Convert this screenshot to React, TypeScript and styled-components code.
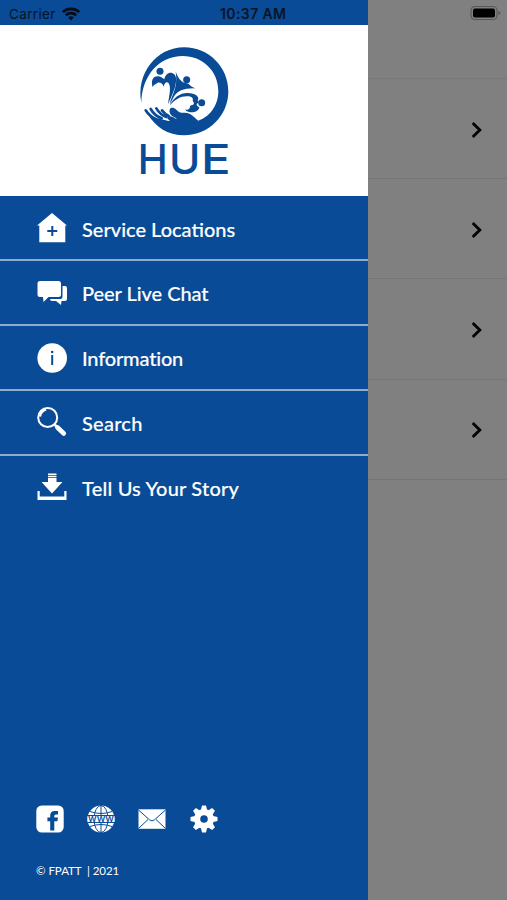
import React from "react";
import styled, { createGlobalStyle } from "styled-components";

const BLUE = "#094b96";

const GlobalStyle = createGlobalStyle`
  * { box-sizing: border-box; }
  body { margin: 0; background: #808080; }
`;
const Screen = styled.div`
  display: grid;
  grid-template-columns: 368px 1fr;
  height: 900px;
  overflow: hidden;
`;
const Drawer = styled.aside`
  display: flex;
  flex-direction: column;
  background: ${BLUE};
  color: #fff;
  font-family: Lato, "Liberation Sans", sans-serif;
`;
const StatusBar = styled.div`
  display: flex;
  align-items: center;
  height: 25px;
  flex: none;
  padding: 2px 0 0 9px;
  color: #071426;
  font: 400 13.5px/20px Inter, "Liberation Sans", sans-serif;
`;
const Carrier = styled.span`
  width: 53px;
  letter-spacing: 0.35px;
`;
const Clock = styled.span`
  margin-left: 140px;
  font-weight: 600;
  font-size: 14px;
  letter-spacing: 0.4px;
  white-space: nowrap;
`;
const Brand = styled.header`
  display: flex;
  justify-content: center;
  height: 171px;
  flex: none;
  padding: 13px 0 0 2px;
  background: #fff;
`;
const Menu = styled.nav`
  display: flex;
  flex-direction: column;
  padding-top: 0.7px;
`;
const MenuItem = styled.a`
  display: flex;
  align-items: center;
  gap: 14px;
  height: 64.8px;
  padding-left: 37px;
  border-bottom: 2px solid #8eacd0;
  &:last-child { border-bottom-color: transparent; }
`;
const MenuLabel = styled.span<{ $spacing: number }>`
  font-size: 20px;
  line-height: 24px;
  font-weight: 500;
  -webkit-text-stroke: 0.15px #fff;
  letter-spacing: ${(p) => p.$spacing}px;
  white-space: nowrap;
  padding-top: 1px;
`;
const Footer = styled.footer`
  margin-top: auto;
  padding: 0 0 21px 36px;
`;
const Social = styled.div`
  display: flex;
  align-items: center;
  gap: 23.2px;
  height: 28px;
`;
const Copyright = styled.p`
  margin: 29px 0 0;
  font-size: 11.5px;
  line-height: 17px;
  white-space: pre;
  letter-spacing: -0.05px;
`;
const Page = styled.main`
  display: flex;
  flex-direction: column;
  background: #808080;
`;
const PageTop = styled.div`
  display: flex;
  justify-content: flex-end;
  height: 79px;
  padding: 5px 6px 0 0;
  border-bottom: 1px solid #787878;
`;
const PageRow = styled.div`
  display: flex;
  align-items: center;
  justify-content: flex-end;
  height: 100.2px;
  padding: 2px 24px 0 0;
  border-bottom: 1px solid #757575;
`;

const Logo = () => (
  <svg width="110" height="145" viewBox="0 0 330 435" fill={BLUE}>
    <path d="M34 194C18 108 78 28 163 28c73 0 132 59 132 132s-59 132-132 132c-50 0-88-26-110-65l30 20c16 5 28 4 37 1-17-10-3-18 10-10 16 10 41 20 75 10C238 238 265 203 265 160 265 98 217 54 158 54 88 54 36 112 34 194z" />
    <path d="M75 240c25 1 39 14 60 8 7-2 6-6 1-9-12-5-19-13-17-24 2-8 12-7 20 0 8 8 15 10 24 9 18-1 29 13 42 24l-20 29c-40 12-90 6-110-37z" />
    <g fill="none" stroke={BLUE} strokeLinecap="round" strokeWidth="8">
      <path d="M47 217c7 11 16 20 30 26" />
      <path d="M62 213c8 14 19 23 33 28" />
      <path d="M79 211c7 12 17 21 30 26" />
      <path d="M96 217c6 8 12 13 20 17" />
    </g>
    <circle cx="90" cy="100" r="10.500" />
    <circle cx="170" cy="125" r="10.500" />
    <circle cx="215" cy="194" r="10.500" />
    <path d="M68 148C62 128 69 114 84 115c8 0 13 5 19 9 3-14 14-23 25-18 21 9 7 50-14 93 3-24 9-46 4-59-5-13-15-6-17 6-3-10-10-13-17-12-4 0-5 4-8 5-5 2-6 4-8 9z" />
    <path d="M137 101c8 19 15 29 26 33 6 2 10 0 14 5 5 6 11 9 19 12-34-1-53 7-65 26l-11 21c3-24 25-48 17-97z" />
    <path d="M119 203c11-24 31-38 53-38 26 0 38 13 31 22 4 5 2 9-3 11 0 7 5 8 8 10-3 17-30 20-43 7 8 1 12-1 14-5 2-4-1-6 5-8 9-2 10-7 4-13 3-9-4-14-15-14-20-1-38 9-54 28z" />
    <g fontFamily="Inter, sans-serif" fontSize="122" fontWeight="500">
      <text x="23" y="408" textLength="90" lengthAdjust="spacingAndGlyphs">H</text>
      <text x="117" y="408" textLength="94" lengthAdjust="spacingAndGlyphs">U</text>
      <text x="213" y="408" textLength="89" lengthAdjust="spacingAndGlyphs">E</text>
    </g>
  </svg>
);

const Wifi = () => (
  <svg width="18" height="14" viewBox="0 0 18 14" fill="none" stroke="#050d18" strokeWidth="2.700">
    <path d="M.8 5C5.300.7 12.700.7 17.200 5M3.800 8.200c2.900-2.800 7.500-2.800 10.400 0" />
    <path d="M9 13.500 6.200 10.500a4 4 0 0 1 5.600 0z" fill="#050d18" stroke="none" />
  </svg>
);

const Battery = () => (
  <svg width="31" height="16" viewBox="0 0 31 16">
    <rect x="1" y="1.500" width="26" height="13" rx="4" fill="none" stroke="#585858" strokeWidth="1.200" />
    <rect x="3" y="3.500" width="22" height="9" rx="2" />
    <path d="M28.500 6v4q2-.5 2-2t-2-2z" fill="#585858" />
  </svg>
);

const Home = () => (
  <svg width="31" height="32" viewBox="0 0 31 32">
    <path d="M15 1 0 13.500h2.300V30.200h26V13.500H30z" fill="#fff" />
    <path d="M15.300 14v10M10.300 19h10" stroke={BLUE} strokeWidth="2" />
  </svg>
);

const Chat = () => (
  <svg width="31" height="28" viewBox="0 0 31 28" fill="#fff">
    <path d="M25.500 7h2.500q2 0 2 2v11q0 2-2 2h-3.500l-.5 4-5-4h-4q-2 0-2-2h10.500q2 0 2-2z" />
    <path d="M3 2h18.500Q24 2 24 4.500v11q0 2.500-2.500 2.500h-10L6.500 23 6 18H3Q.5 18 .5 15.500v-11Q.5 2 3 2z" />
  </svg>
);

const Info = () => (
  <svg width="31" height="32" viewBox="0 0 31 32">
    <circle cx="15.200" cy="16" r="14.800" fill="#fff" />
    <circle cx="15.200" cy="10" r="1.300" fill={BLUE} />
    <path d="M15.200 13v10" stroke={BLUE} strokeWidth="2" />
  </svg>
);

const Search = () => (
  <svg width="31" height="32" viewBox="0 0 31 32" fill="none" stroke="#fff">
    <circle cx="10.700" cy="11.500" r="9.500" strokeWidth="2" />
    <path d="m17 18 4 4" strokeWidth="2.500" />
    <path d="m20.500 21.500 6.300 6" strokeWidth="4.600" strokeLinecap="round" />
    <path d="M3 10.500c.5-4 2-5.500 6-7" strokeWidth="2.300" />
  </svg>
);

const Download = () => (
  <svg width="31" height="32" viewBox="0 0 31 32" fill="#fff">
    <path d="M11 2.500h8.500V4H11zm0 2.300h8.500v1.400H11zM11 7h8.500v4h6L15 22.500 4.500 11H11z" />
    <path d="M.5 20h2.200v5.500h24.600V20h2.200v9H.5z" />
  </svg>
);

const Facebook = () => (
  <svg width="28" height="28" viewBox="0 0 28 28">
    <rect x=".300" y=".500" width="27.400" height="27" rx="5.500" fill="#fff" />
    <path d="M14.200 25.500V16.200h-2.800v-3.700h2.800v-2q0-4.500 4.400-4.500H22v3.500h-2.200q-1.500 0-1.500 1.500v1.500H22l-.6 3.700h-3.100v9.300z" fill={BLUE} />
  </svg>
);

const Globe = () => (
  <svg width="28" height="28" viewBox="0 0 28 28">
    <circle cx="14" cy="14" r="13.500" fill="#fff" />
    <g fill="none" stroke={BLUE} strokeWidth="1">
      <ellipse cx="14" cy="14" rx="7" ry="13.500" />
      <path d="M14 0v10.500M14 17.500V28M3 6.500q11 4 22 0M3 21.500q11-4 22 0M0 10.500h28M0 17.500h28" />
    </g>
    <path d="M.5 11h27v6H.5z" fill="#fff" />
    <text x="1" y="16.800" textLength="26" lengthAdjust="spacingAndGlyphs" fill={BLUE} fontFamily="Inter, sans-serif" fontSize="10" fontWeight="500">www</text>
  </svg>
);

const Mail = () => (
  <svg width="28" height="28" viewBox="0 0 28 28">
    <path d="M.5 4.300h27v19.500H.5z" fill="#fff" />
    <path d="m.5 5 11 9.800q2.500 2.200 5 0l11-9.800M.5 23.500l9.500-9M27.500 23.500l-9.500-9" fill="none" stroke={BLUE} strokeWidth="1" />
  </svg>
);

const teeth = [0, 45, 90, 135, 180, 225, 270, 315];
const Gear = () => (
  <svg width="28" height="28" viewBox="0 0 28 28" fill="#fff">
    {teeth.map((angle) => (
      <path key={angle} d="M12 .5h4l1.300 5.500h-6.600z" transform={`rotate(${angle} 14 14)`} />
    ))}
    <circle cx="14" cy="14" r="6.900" fill="none" stroke="#fff" strokeWidth="6.200" />
  </svg>
);

const Chevron = () => (
  <svg width="13" height="18" viewBox="0 0 13 18" fill="none" stroke="#050505" strokeWidth="2.900">
    <path d="m2.700 2 7.100 7-7.100 7" />
  </svg>
);

const items = [
  { label: "Service Locations", icon: <Home />, spacing: 0 },
  { label: "Peer Live Chat", icon: <Chat />, spacing: -0.05 },
  { label: "Information", icon: <Info />, spacing: -0.18 },
  { label: "Search", icon: <Search />, spacing: 0.25 },
  { label: "Tell Us Your Story", icon: <Download />, spacing: 0.2 },
];

export default function App() {
  return (
    <Screen>
      <GlobalStyle />
      <Drawer>
        <StatusBar>
          <Carrier>Carrier</Carrier>
          <Wifi />
          <Clock>10:37 AM</Clock>
        </StatusBar>
        <Brand><Logo /></Brand>
        <Menu>
          {items.map((item) => (
            <MenuItem key={item.label}>
              {item.icon}
              <MenuLabel $spacing={item.spacing}>{item.label}</MenuLabel>
            </MenuItem>
          ))}
        </Menu>
        <Footer>
          <Social><Facebook /><Globe /><Mail /><Gear /></Social>
          <Copyright>{"© FPATT  | 2021"}</Copyright>
        </Footer>
      </Drawer>
      <Page>
        <PageTop><Battery /></PageTop>
        {[0, 1, 2, 3].map((row) => (
          <PageRow key={row}><Chevron /></PageRow>
        ))}
      </Page>
    </Screen>
  );
}
